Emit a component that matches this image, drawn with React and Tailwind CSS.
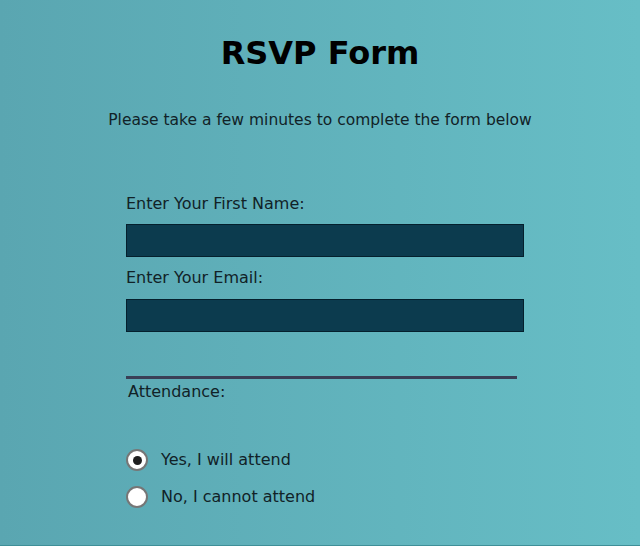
import React, { useState } from 'react';

export default function App() {
  const [attend, setAttend] = useState('yes');

  return (
    <div
      className="min-h-[546px] w-full bg-gradient-to-r from-[#5aa6b1] to-[#67bec6] border-b border-[#3f8f98] text-[#112227]"
      style={{ fontFamily: '"DejaVu Sans", Verdana, sans-serif' }}
    >
      <div className="flex flex-col items-center pt-[34px]">
        <h1 className="text-[32px] leading-[38px] font-bold text-black">RSVP Form</h1>
        <p className="mt-[38px] text-[15.5px] leading-[20px]">Please take a few minutes to complete the form below</p>
      </div>

      <form className="mx-[126px] mt-[64px] w-[398px] flex flex-col text-[16px]">
        <label className="leading-[20px]">Enter Your First Name:</label>
        <input
          type="text"
          className="mt-[10px] h-[33px] w-full bg-[#0c3b4e] border border-[#05202d] outline-none"
        />
        <label className="mt-[11px] leading-[20px]">Enter Your Email:</label>
        <input
          type="email"
          className="mt-[11px] h-[33px] w-full bg-[#0c3b4e] border border-[#05202d] outline-none"
        />

        <div className="mt-[44px] h-[3px] w-[391px] bg-[#3a3f56]" />
        <span className="mt-[3px] ml-[2px] leading-[20px]">Attendance:</span>

        <div className="mt-[47px] flex flex-col gap-[15px]">
          {[
            ['yes', 'Yes, I will attend'],
            ['no', 'No, I cannot attend'],
          ].map(([val, text]) => (
            <label key={val} className="flex items-center gap-[13px] cursor-pointer leading-[20px]">
              <span
                onClick={() => setAttend(val)}
                className="w-[22px] h-[22px] rounded-full bg-white border-2 border-[#767676] flex items-center justify-center"
              >
                {attend === val && <span className="w-[9px] h-[9px] rounded-full bg-[#1f1f1f]" />}
              </span>
              <span>{text}</span>
            </label>
          ))}
        </div>
      </form>
    </div>
  );
}
